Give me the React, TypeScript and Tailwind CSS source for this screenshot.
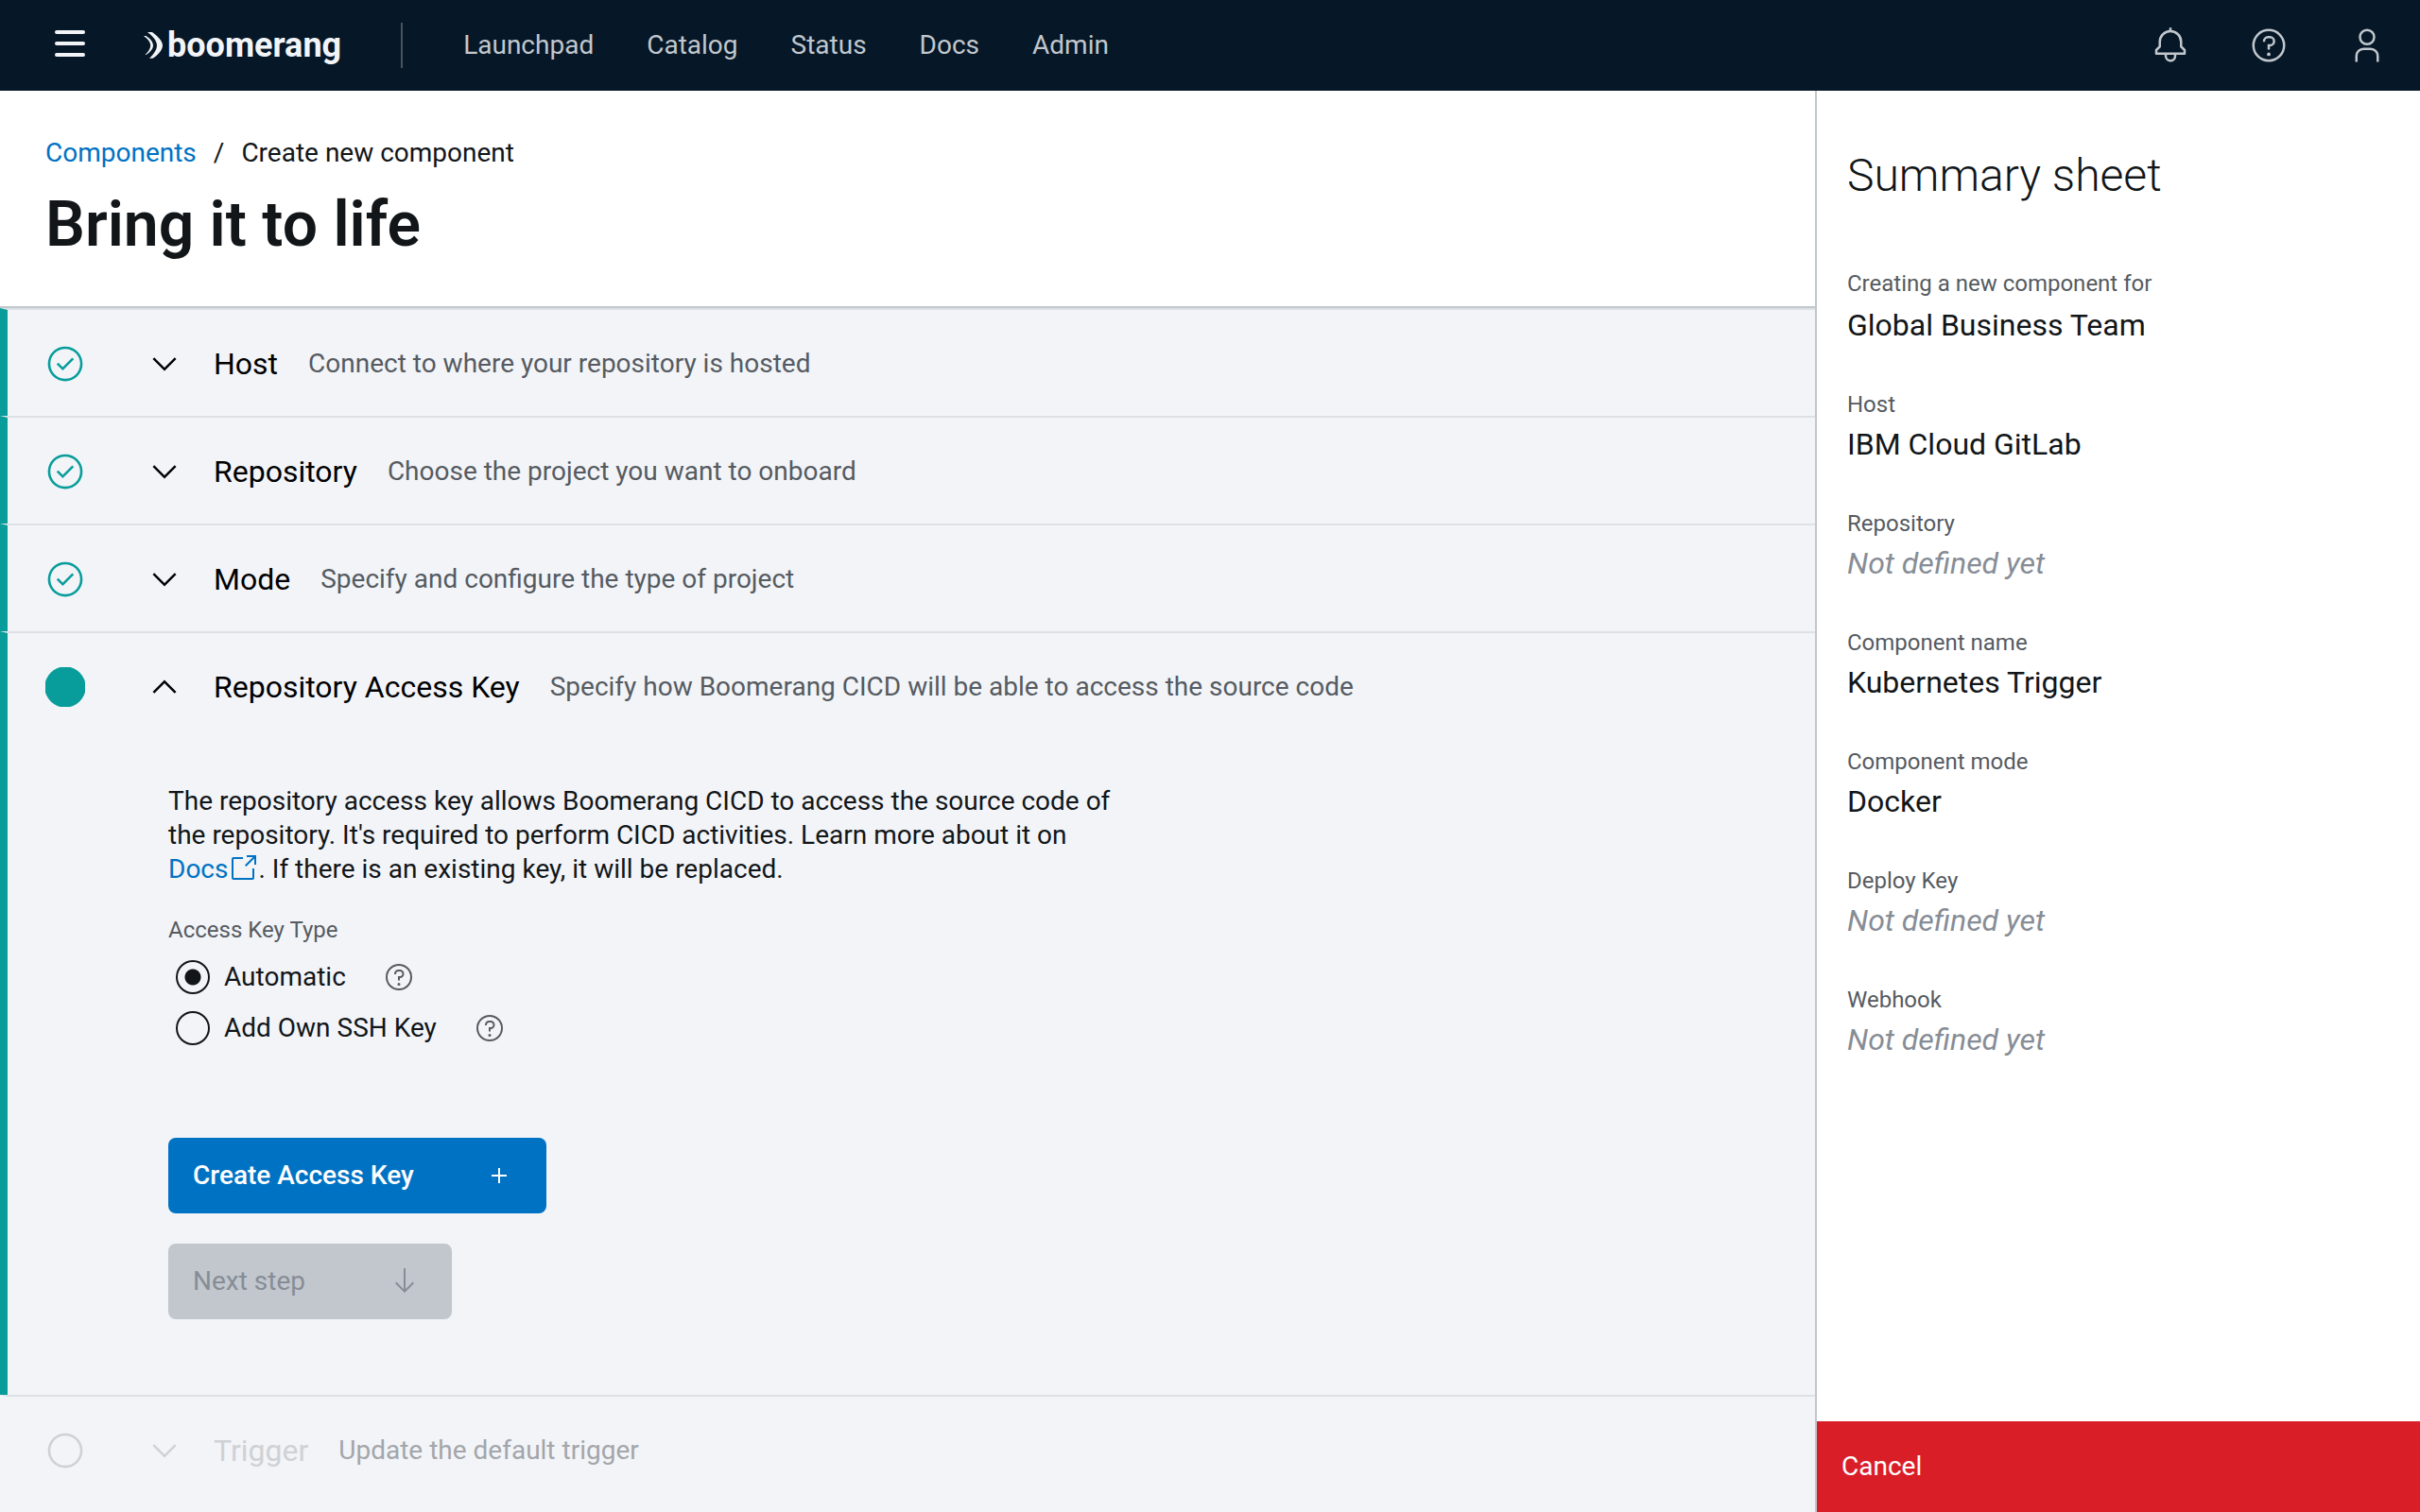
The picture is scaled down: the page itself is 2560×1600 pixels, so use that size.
import { useState } from "react";
import type { ReactNode } from "react";

type IconProps = { className?: string; children: ReactNode };

function Icon({ className = "size-8", children }: IconProps) {
  return (
    <svg viewBox="0 0 32 32" fill="currentColor" aria-hidden="true" className={`shrink-0 ${className}`}>
      {children}
    </svg>
  );
}

function HelpIcon({ className }: { className?: string }) {
  return (
    <Icon className={className}>
      <path d="M16,2A14,14,0,1,0,30,16,14,14,0,0,0,16,2Zm0,26A12,12,0,1,1,28,16,12,12,0,0,1,16,28Z" />
      <circle cx="16" cy="23.5" r="1.5" />
      <path d="M17,8H15.5A4.49,4.49,0,0,0,11,12.5V13h2v-.5A2.5,2.5,0,0,1,15.5,10H17a2.5,2.5,0,0,1,0,5H15v4.5h2V17a4.5,4.5,0,0,0,0-9Z" />
    </Icon>
  );
}

function BellIcon() {
  return (
    <Icon className="size-10">
      <path d="M28.7071,19.293,26,16.5859V13a10.0136,10.0136,0,0,0-9-9.9492V1H15V3.0508A10.0136,10.0136,0,0,0,6,13v3.5859L3.2929,19.293A1,1,0,0,0,3,20v3a1,1,0,0,0,1,1h7v.7768a5.152,5.152,0,0,0,4.5,5.1987A5.0057,5.0057,0,0,0,21,25V24h7a1,1,0,0,0,1-1V20A1,1,0,0,0,28.7071,19.293ZM19,25a3,3,0,0,1-6,0V24h6Zm8-3H5V20.4141L7.707,17.707A1,1,0,0,0,8,17V13a8,8,0,0,1,16,0v4a1,1,0,0,0,.293.707L27,20.4141Z" />
    </Icon>
  );
}

function UserIcon() {
  return (
    <Icon className="size-10">
      <path d="M16,4a5,5,0,1,1-5,5,5,5,0,0,1,5-5m0-2a7,7,0,1,0,7,7A7,7,0,0,0,16,2Z" />
      <path d="M26,30H24V25a5,5,0,0,0-5-5H13a5,5,0,0,0-5,5v5H6V25a7,7,0,0,1,7-7h6a7,7,0,0,1,7,7Z" />
    </Icon>
  );
}

function ChevronIcon({ up }: { up?: boolean }) {
  return (
    <Icon className="size-10">
      {up ? (
        <polygon points="16,10 26,20 24.6,21.4 16,12.8 7.4,21.4 6,20" />
      ) : (
        <polygon points="16,22 6,12 7.4,10.6 16,19.2 24.6,10.6 26,12" />
      )}
    </Icon>
  );
}

type Status = "done" | "current" | "pending";

function StatusIcon({ status }: { status: Status }) {
  if (status === "current") {
    return (
      <Icon className="size-[42px] text-[#089d9b]">
        <circle cx="16" cy="16" r="16.5" />
      </Icon>
    );
  }
  if (status === "pending") {
    return (
      <Icon className="size-[42px] text-[#cfd1d5]">
        <path d="M16,2A14,14,0,1,0,30,16,14,14,0,0,0,16,2Zm0,26A12,12,0,1,1,28,16,12,12,0,0,1,16,28Z" />
      </Icon>
    );
  }
  return (
    <Icon className="size-[42px] text-[#089d9b]">
      <polygon points="14,21.4 9,16.4 10.4,15 14,18.6 21.6,11 23,12.4" />
      <path d="M16,2A14,14,0,1,0,30,16,14,14,0,0,0,16,2Zm0,26A12,12,0,1,1,28,16,12,12,0,0,1,16,28Z" />
    </Icon>
  );
}

type StepProps = { title: string; description: string; status: Status; children?: ReactNode };

function Step({ title, description, status, children }: StepProps) {
  const pending = status === "pending";
  return (
    <section
      className={`border-t-2 border-l-8 border-t-[#dde1e6] ${pending ? "border-l-[#f2f4f8]" : "border-l-[#089d9b]"}`}
    >
      <button
        type="button"
        disabled={pending}
        aria-expanded={Boolean(children)}
        className="flex h-28 w-full items-center pt-0.5 pl-10 text-left"
      >
        <StatusIcon status={status} />
        <span className={`ml-16 flex items-center ${pending ? "text-[#cfd1d5]" : "text-black"}`}>
          <ChevronIcon up={Boolean(children)} />
          <span className="ml-8 text-[32px] leading-10">{title}</span>
        </span>
        <span className={`ml-8 text-[28px] leading-9 ${pending ? "text-[#a3a6aa]" : "text-[#565b61]"}`}>
          {description}
        </span>
      </button>
      {children}
    </section>
  );
}

function RadioOption({ id, label, checked, onSelect }: { id: string; label: string; checked: boolean; onSelect: () => void }) {
  return (
    <div className="flex h-9 items-center">
      <input
        id={id}
        type="radio"
        name="access-key-type"
        checked={checked}
        onChange={onSelect}
        className="size-9 appearance-none rounded-full border-2 border-[#121619] bg-[radial-gradient(circle,#121619_8px,transparent_9px)] bg-no-repeat not-checked:bg-none"
      />
      <label htmlFor={id} className="pl-[15px] text-[28px] leading-9">
        {label}
      </label>
      <button type="button" aria-label={`Help: ${label}`} className="ml-10 text-[#565b61]">
        <HelpIcon className="size-8" />
      </button>
    </div>
  );
}

function AccessKeyForm() {
  const [mode, setMode] = useState("automatic");
  return (
    <div className="pt-12 pr-8 pb-20 pl-[170px] text-[#121619]">
      <p className="max-w-[1000px] text-[28px] leading-9">
        The repository access key allows Boomerang CICD to access the source code of the repository. It's required to
        perform CICD activities. Learn more about it on{" "}
        <a href="#docs" className="whitespace-nowrap text-[#0072c3]">
          Docs
          <svg viewBox="0 0 32 32" fill="currentColor" aria-hidden="true" className="-my-2 inline size-8 align-[2px]">
            <path d="M26,28H6a2,2,0,0,1-2-2V6A2,2,0,0,1,6,4H16V6H6V26H26V16h2V26A2,2,0,0,1,26,28Z" />
            <polygon points="20,2 20,4 26.6,4 18,12.6 19.4,14 28,5.4 28,12 30,12 30,2" />
          </svg>
        </a>
        . If there is an existing key, it will be replaced.
      </p>
      <fieldset className="mt-[30px]">
        <legend className="text-2xl leading-8 text-[#565b61]">Access Key Type</legend>
        <div className="flex flex-col gap-[18px] pt-4 pl-2">
          <RadioOption
            id="automatic"
            label="Automatic"
            checked={mode === "automatic"}
            onSelect={() => setMode("automatic")}
          />
          <RadioOption id="ssh" label="Add Own SSH Key" checked={mode === "ssh"} onSelect={() => setMode("ssh")} />
        </div>
      </fieldset>
      <div className="flex flex-col items-start gap-8 pt-[98px]">
        <button
          type="button"
          className="flex h-20 w-[400px] items-center justify-between rounded-lg bg-[#0072c3] pr-[34px] pl-[26px] text-[28px] leading-9 font-medium text-white"
        >
          Create Access Key
          <Icon>
            <polygon points="17,15 17,8 15,8 15,15 8,15 8,17 15,17 15,24 17,24 17,17 24,17 24,15" />
          </Icon>
        </button>
        <button
          type="button"
          disabled
          className="flex h-20 w-[300px] items-center justify-between rounded-lg bg-[#c1c7cd] pr-[34px] pl-[26px] text-[28px] leading-9 text-[#878d96]"
        >
          Next step
          <Icon>
            <polygon points="24.6,16.6 17,24.2 17,2 15,2 15,24.2 7.4,16.6 6,18 16,28 26,18" />
          </Icon>
        </button>
      </div>
    </div>
  );
}

const NAV = ["Launchpad", "Catalog", "Status", "Docs", "Admin"];

const SUMMARY: [string, string | null][] = [
  ["Creating a new component for", "Global Business Team"],
  ["Host", "IBM Cloud GitLab"],
  ["Repository", null],
  ["Component name", "Kubernetes Trigger"],
  ["Component mode", "Docker"],
  ["Deploy Key", null],
  ["Webhook", null],
];

function Header() {
  return (
    <header className="flex h-24 items-center bg-[#061727] pr-9 pl-[58px] text-[#c1c7cd]">
      <button type="button" aria-label="Menu" className="flex w-8 flex-col gap-2 pb-1">
        <span className="h-1 rounded-sm bg-[#f2f4f8]" />
        <span className="h-1 rounded-sm bg-[#f2f4f8]" />
        <span className="h-1 rounded-sm bg-[#f2f4f8]" />
      </button>
      <a href="#home" className="ml-[62px] flex items-center gap-[5px] text-[#f2f4f8]">
        <svg viewBox="0 0 20 28" fill="currentColor" aria-hidden="true" className="h-7 w-5 shrink-0">
          <path d="M4 0H9C14 3.500 20 9 20 14C20 19 15 24.500 9.500 27.700H6C10 24 14 19 14 14C14 9 9 3.500 4 0Z" />
          <path d="M0 4H2.500C7 7 10 10.500 10 14C10 18 6.500 21.500 2.500 24H1.500C5 20.500 7.200 17.500 7.200 14C7.200 10.500 4 7 0 4Z" />
        </svg>
        <span className="text-4xl leading-10 font-bold">boomerang</span>
      </a>
      <div className="ml-[63px] h-12 w-0.5 bg-[#4d5358]" />
      <nav className="ml-16 flex gap-14 text-[28px] leading-9">
        {NAV.map((item) => (
          <a key={item} href={`#${item.toLowerCase()}`}>
            {item}
          </a>
        ))}
      </nav>
      <div className="ml-auto flex gap-16">
        <button type="button" aria-label="Notifications">
          <BellIcon />
        </button>
        <button type="button" aria-label="Help">
          <HelpIcon className="size-10" />
        </button>
        <button type="button" aria-label="Profile">
          <UserIcon />
        </button>
      </div>
    </header>
  );
}

function Summary() {
  return (
    <aside className="flex w-1/4 flex-col border-l-2 border-[#c1c7cd] bg-white text-[#121619]">
      <h2 className="px-8 pt-[60px] text-5xl leading-[60px] font-light">Summary sheet</h2>
      <dl className="flex flex-col gap-12 px-8 pt-[68px]">
        {SUMMARY.map(([label, value]) => (
          <div key={label} className="group">
            <dt className="text-2xl leading-8 text-[#565b61] group-first:pb-0.5">{label}</dt>
            <dd className={`pt-1.5 text-[32px] leading-10 ${value ? "" : "text-[#878d96] italic"}`}>
              {value ?? "Not defined yet"}
            </dd>
          </div>
        ))}
      </dl>
      <button type="button" className="mt-auto h-24 bg-[#da1e28] px-[26px] text-left text-[28px] leading-9 text-white">
        Cancel
      </button>
    </aside>
  );
}

export default function App() {
  return (
    <div className="flex min-h-screen flex-col bg-[#f2f4f8] font-[Roboto,sans-serif]">
      <Header />
      <div className="flex flex-1">
        <main className="flex-1">
          <div className="border-b-2 border-[#c1c7cd] bg-white px-12 py-12 text-[#121619]">
            <nav aria-label="Breadcrumb" className="flex gap-[18px] text-[28px] leading-9">
              <a href="#components" className="text-[#0072c3]">
                Components
              </a>
              <span>/</span>
              <span>Create new component</span>
            </nav>
            <h1 className="pt-5 text-[66px] leading-[76px] font-semibold">Bring it to life</h1>
          </div>
          <Step title="Host" description="Connect to where your repository is hosted" status="done" />
          <Step title="Repository" description="Choose the project you want to onboard" status="done" />
          <Step title="Mode" description="Specify and configure the type of project" status="done" />
          <Step
            title="Repository Access Key"
            description="Specify how Boomerang CICD will be able to access the source code"
            status="current"
          >
            <AccessKeyForm />
          </Step>
          <Step title="Trigger" description="Update the default trigger" status="pending" />
        </main>
        <Summary />
      </div>
    </div>
  );
}
